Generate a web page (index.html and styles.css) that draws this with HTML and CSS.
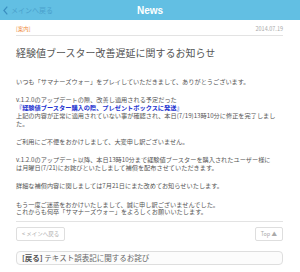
FILE: index.html
```html
<!DOCTYPE html>
<html lang="ja">
<head>
    <meta charset="UTF-8">
    <meta name="viewport" content="width=device-width, initial-scale=1.0">
    <title>News</title>
    <link rel="stylesheet" href="styles.css">
</head>
<body>
    <header class="topbar">
        <a class="back-link" href="#">
            <svg class="chevron" width="5" height="9" viewBox="0 0 5 9">
                <path d="M4.3 0.6 L0.9 4.5 L4.3 8.4" fill="none" stroke="currentColor" stroke-width="1.2"/>
            </svg>
            <span>メインへ戻る</span>
        </a>
        <h1>News</h1>
        <span></span>
    </header>

    <main class="article">
        <div class="meta">
            <span class="category">[案内]</span>
            <span class="date">2014.07.19</span>
        </div>

        <h2 class="title">経験値ブースター改善遅延に関するお知らせ</h2>

        <div class="body">
            <p>いつも「サマナーズウォー」をプレイしていただきまして、ありがとうございます。</p>
            <p>v.1.2.0のアップデートの際、改善し適用される予定だった<br>
                <strong class="notice">『経験値ブースター購入の際、プレゼントボックスに発送』</strong><br>
                上記の内容が正常に適用されていない事が確認され、本日(7/19)13時10分に修正を完了しました。</p>
            <p>ご利用にご不便をおかけしまして、大変申し訳ございません。</p>
            <p>v.1.2.0のアップデート以降、本日13時10分まで経験値ブースターを購入されたユーザー様に<br>
                は月曜日(7/21)にお詫びといたしまして補償を配布させていただきます。</p>
            <p>詳細な補償内容に関しましては7月21日にまた改めてお知らせいたします。</p>
            <p>もう一度ご迷惑をおかけいたしまして、誠に申し訳ございませんでした。<br>
                これからも何卒「サマナーズウォー」をよろしくお願いいたします。</p>
        </div>

        <div class="pager">
            <a class="btn" href="#">&lt; メインへ戻る</a>
            <a class="btn" href="#">Top ▲</a>
        </div>

        <a class="related" href="#"><b>[戻る]</b> テキスト誤表記に関するお詫び</a>
    </main>
</body>
</html>
```

FILE: styles.css
```css
body {
    margin: 0;
    font-family: "Noto Sans CJK JP", sans-serif;
    color: #555;
    background-color: #ffffff;
}

a {
    text-decoration: none;
}

/* header bar */
.topbar {
    height: 20px;
    background-color: #62bfe3;
    display: grid;
    grid-template-columns: 1fr auto 1fr;
    align-items: center;
}

.back-link {
    display: flex;
    align-items: center;
    gap: 3px;
    padding-left: 3px;
    font-size: 7px;
    color: #4a9fcc;
}

.chevron {
    color: #3a8fc0;
}

.topbar h1 {
    margin: 0;
    font: bold 10px "Liberation Sans", sans-serif;
    color: #ffffff;
}

/* article */
.article {
    padding: 0 17px 0 16px;
}

.meta {
    display: flex;
    justify-content: space-between;
    align-items: center;
    line-height: 8px;
    padding: 5px 0 2px;
    border-bottom: 1px solid #e3e3e3;
}

.category {
    font-size: 5.5px;
    color: #ee8a3c;
}

.date {
    font-size: 5.5px;
    color: #aaa;
}

.title {
    margin: 11px 0 0;
    font-size: 10px;
    line-height: 12px;
    font-weight: normal;
    color: #555;
}

.body {
    margin-top: 19px;
    font-size: 6.2px;
    line-height: 7.8px;
    padding-bottom: 5px;
    border-bottom: 1px solid #e3e3e3;
}

.body p {
    margin: 0 0 10.5px;
}

.body p:last-child {
    margin-bottom: 0;
}

.notice {
    color: #2333d0;
}

/* bottom navigation */
.pager {
    display: flex;
    justify-content: space-between;
    margin-top: 5px;
}

.btn {
    height: 14px;
    line-height: 12px;
    padding: 0 5px;
    box-sizing: border-box;
    border: 1px solid #dedede;
    border-radius: 2px;
    font-size: 5.5px;
    color: #aaa;
}

.related {
    display: block;
    margin-top: 10px;
    height: 14px;
    line-height: 12px;
    box-sizing: border-box;
    padding-left: 5px;
    border: 1px solid #dedede;
    border-radius: 4px;
    background-color: #fcfcfc;
    font-size: 7.5px;
    color: #666;
}

.related b {
    color: #555;
}
```
